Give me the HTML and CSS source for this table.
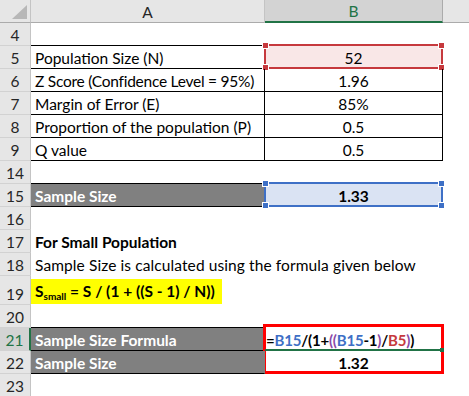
FILE: index.html
```html
<!DOCTYPE html>
<html>
<head>
<meta charset="utf-8">
<link rel="stylesheet" href="styles.css">
</head>
<body>
<div class="sheet">
  <div class="corner"><span class="tri"></span></div>
  <div class="colh">A</div>
  <div class="colh sel">B</div>
  <div class="colh last"></div>

  <div class="rowh">4</div><div class="c bb"></div><div class="c bb"></div><div class="c"></div>

  <div class="rowh">5</div><div class="c bb br">Population Size (N)</div>
  <div class="c bb br num pink">52<div class="frame red"><i class="h tl"></i><i class="h tr"></i><i class="h bl"></i><i class="h brc"></i></div></div><div class="c"></div>

  <div class="rowh">6</div><div class="c bb br tight">Z Score (Confidence Level = 95%)</div><div class="c bb br num">1.96</div><div class="c"></div>
  <div class="rowh">7</div><div class="c bb br">Margin of Error (E)</div><div class="c bb br num">85%</div><div class="c"></div>
  <div class="rowh">8</div><div class="c bb br">Proportion of the population (P)</div><div class="c bb br num">0.5</div><div class="c"></div>
  <div class="rowh">9</div><div class="c bb br">Q value</div><div class="c bb br num">0.5</div><div class="c"></div>

  <div class="rowh">14</div><div class="c bb"></div><div class="c bb"></div><div class="c"></div>

  <div class="rowh">15</div><div class="c bb br gray">Sample Size</div>
  <div class="c bb br num bold blue">1.33<div class="frame bluef"><i class="h tl"></i><i class="h tr"></i><i class="h bl"></i><i class="h brc"></i></div></div><div class="c"></div>

  <div class="rowh">16</div><div class="c"></div><div class="c"></div><div class="c"></div>
  <div class="rowh">17</div><div class="c bold">For Small Population</div><div class="c"></div><div class="c"></div>
  <div class="rowh">18</div><div class="c wide">Sample Size is calculated using the formula given below</div><div class="c"></div><div class="c"></div>

  <div class="rowh">19</div><div class="c yrow"><span class="yellow">S<sub>small</sub> = S / (1 + ((S - 1) / N))</span></div><div class="c"></div><div class="c"></div>

  <div class="rowh">20</div><div class="c bb"></div><div class="c"></div><div class="c"></div>

  <div class="rowh act">21</div><div class="c bb gray">Sample Size Formula</div>
  <div class="c formula">=<span class="fb">B15</span>/(1+<span class="fp">((</span><span class="fb">B15</span>-1<span class="fp">)</span>/<span class="fr">B5</span><span class="fp">)</span>)<span class="redbox"></span><span class="actline"></span><span class="fill"></span></div><div class="c"></div>

  <div class="rowh">22</div><div class="c bb gray">Sample Size</div><div class="c num bold">1.32</div><div class="c"></div>

  <div class="rowh">23</div><div class="c"></div><div class="c"></div><div class="c"></div>
</div>
</body>
</html>
```

FILE: styles.css
```css
* { box-sizing: border-box; }
body {
  margin: 0;
  background: #fff;
  font-family: Lato, "Liberation Sans", sans-serif;
  font-size: 15.5px;
  color: #000;
}
.sheet {
  display: grid;
  grid-template-columns: 31px 234px 178px 26px;
  grid-template-rows: 23px repeat(11, 23px) 29px repeat(4, 23px);
  width: 469px;
  height: 396px;
  overflow: hidden;
}
.corner {
  position: relative;
  background: #e6e6e6;
  border-right: 1px solid #c4c4c4;
  border-bottom: 1px solid #ababab;
}
.tri {
  position: absolute;
  left: 12px;
  top: 5px;
  width: 15px;
  height: 14px;
  background: #b7b7b7;
  clip-path: polygon(100% 0, 100% 100%, 0 100%);
}
.colh {
  background: #e6e6e6;
  border-right: 1px solid #c4c4c4;
  border-bottom: 1px solid #ababab;
  display: flex;
  align-items: center;
  justify-content: center;
  color: #262626;
  padding-top: 1px;
}
.colh.sel {
  background: #d3d3d3;
  color: #217346;
  border-bottom: 2px solid #217346;
  border-right-color: #ababab;
}
.colh.last { border-right: none; }
.rowh {
  background: #e6e6e6;
  border-right: 1px solid #c4c4c4;
  border-bottom: 1px solid #d2d2d2;
  display: flex;
  align-items: flex-end;
  justify-content: center;
  line-height: 20px;
  color: #262626;
}
.rowh.act {
  background: #d3d3d3;
  color: #217346;
  border-right: 2px solid #217346;
}
.c {
  position: relative;
  min-width: 0;
  border-right: 1px solid transparent;
  border-bottom: 1px solid transparent;
  padding: 0 4px;
  display: flex;
  align-items: flex-end;
  white-space: nowrap;
  line-height: 20px;
}
.tight { letter-spacing: -0.25px; }
.wide { letter-spacing: 0.1px; }
.bb { border-bottom-color: #000; }
.br { border-right-color: #000; }
.num { justify-content: center; }
.bold { font-weight: 700; }
.gray { background: #808080; color: #fff; font-weight: 700; }
.pink { background: #f9e7e7; }
.blue { background: #dae3f3; }
.frame {
  position: absolute;
  left: -1px;
  right: -1px;
  top: -2px;
  bottom: -1px;
  border: 2px solid;
}
.frame.red { border-color: #c6393d; }
.frame.bluef { border-color: #3e70c6; }
.h {
  position: absolute;
  width: 5px;
  height: 5px;
  box-shadow: 0 0 0 1px #fff;
}
.frame.red .h { background: #c6393d; }
.frame.bluef .h { background: #3e70c6; }
.h.tl { left: -3px; top: -3px; }
.h.tr { right: -3px; top: -3px; }
.h.bl { left: -3px; bottom: -3px; }
.h.brc { right: -3px; bottom: -3px; }
.yrow { padding-left: 0; }
.yellow {
  display: inline-block;
  background: #ffff00;
  width: 191px;
  height: 25px;
  padding-left: 4px;
  font-weight: 700;
  line-height: 24px;
}
.yellow sub {
  font-size: 10px;
  vertical-align: -3px;
  line-height: 0;
}
.formula {
  font-weight: 700;
  font-size: 15px;
  padding-left: 1px;
  letter-spacing: -0.2px;
}
.fb { color: #3e6fc6; }
.fr { color: #c6393d; }
.fp { color: #8a4aa8; }
.redbox {
  position: absolute;
  left: -2px;
  top: -4px;
  width: 181px;
  height: 50px;
  border: 3px solid #ff0000;
}
.actline {
  position: absolute;
  left: 0;
  right: 1px;
  bottom: -1px;
  height: 2px;
  background: #217346;
}
.fill {
  position: absolute;
  right: -2px;
  bottom: -2px;
  width: 4px;
  height: 4px;
  background: #217346;
}
```
